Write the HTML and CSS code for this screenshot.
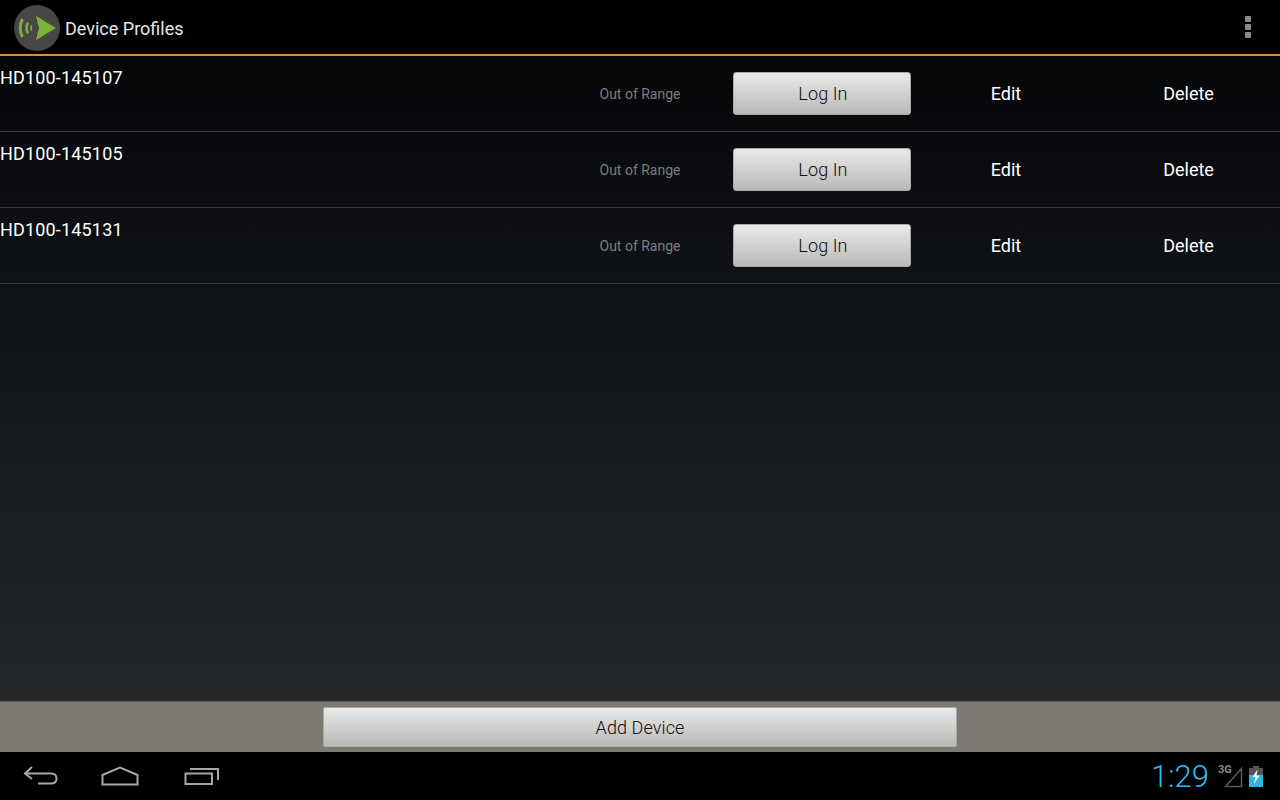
FILE: index.html
```html
<!DOCTYPE html>
<html lang="en">

<head>
    <meta charset="UTF-8" />
    <title>Device Profiles</title>
    <link rel="stylesheet" href="styles.css">
</head>

<body>
    <header class="action-bar">
        <svg class="app-icon" width="48" height="48" viewBox="0 0 48 48">
            <circle cx="24" cy="24" r="23" fill="#474745" />
            <path d="M23 12 L43 24 L23 36 L26 24 Z" fill="#7ab53a" />
            <path d="M9.500 15 Q5 24 9.500 33" fill="none" stroke="#7ab53a" stroke-width="2.800" />
            <path d="M15 18.500 Q12 24 15 29.500" fill="none" stroke="#7ab53a" stroke-width="2.400" />
            <path d="M18.500 21.500 Q17.500 24 18.500 26.500" fill="none" stroke="#7ab53a" stroke-width="1.800" />
        </svg>
        <h1 class="app-title">Device Profiles</h1>
        <div class="overflow-menu">
            <span></span>
            <span></span>
            <span></span>
        </div>
    </header>

    <main class="content">
        <div class="device-row">
            <div class="device-name">HD100-145107</div>
            <div class="device-status">Out of Range</div>
            <div class="login-cell"><button class="btn login-btn">Log In</button></div>
            <div class="row-action edit-cell">Edit</div>
            <div class="row-action delete-cell">Delete</div>
        </div>
        <div class="device-row">
            <div class="device-name">HD100-145105</div>
            <div class="device-status">Out of Range</div>
            <div class="login-cell"><button class="btn login-btn">Log In</button></div>
            <div class="row-action edit-cell">Edit</div>
            <div class="row-action delete-cell">Delete</div>
        </div>
        <div class="device-row">
            <div class="device-name">HD100-145131</div>
            <div class="device-status">Out of Range</div>
            <div class="login-cell"><button class="btn login-btn">Log In</button></div>
            <div class="row-action edit-cell">Edit</div>
            <div class="row-action delete-cell">Delete</div>
        </div>
    </main>

    <div class="add-bar">
        <button class="btn add-btn">Add Device</button>
    </div>

    <footer class="nav-bar">
        <svg class="nav-back" width="36" height="22" viewBox="0 0 36 22">
            <path d="M9 2 L2 8.500 L9 14 M2 8.500 H28 Q33.500 8.500 33.500 13.500 Q33.500 18.500 28 18.500 H15" fill="none" stroke="#a6a6a6" stroke-width="2" />
        </svg>
        <svg class="nav-home" width="38" height="20" viewBox="0 0 38 20">
            <path d="M1.500 9 L19 1.500 L36.500 9 V18.500 H1.500 Z" fill="none" stroke="#a6a6a6" stroke-width="2" />
        </svg>
        <svg class="nav-recent" width="36" height="20" viewBox="0 0 36 20">
            <path d="M1.500 7.500 H28 V18 H1.500 Z" fill="none" stroke="#a6a6a6" stroke-width="2" />
            <path d="M6 3 H34 V14" fill="none" stroke="#a6a6a6" stroke-width="2" />
        </svg>
        <div class="status-area">
            <span class="clock">1:29</span>
            <div class="signal">
                <span class="net-type">3G</span>
                <svg width="19" height="22" viewBox="0 0 19 22">
                    <path d="M1.500 20.500 L17.500 2.500 V20.500 Z" fill="none" stroke="#5a5a5a" stroke-width="1.500" />
                </svg>
            </div>
            <svg class="battery" width="14" height="21" viewBox="0 0 14 21">
                <rect x="4" y="0" width="6" height="2" fill="#555" />
                <rect x="0" y="2" width="14" height="7" fill="#555" />
                <rect x="0" y="9" width="14" height="12" fill="#2fb5e0" />
                <path d="M8.500 3.500 L3.500 11 H6.500 L5 18 L10.500 9.500 H7.500 Z" fill="#fff" />
            </svg>
        </div>
    </footer>
</body>

</html>
```

FILE: styles.css
```css
* {
    box-sizing: border-box;
}

html,
body {
    height: 100%;
}

body {
    margin: 0;
    height: 800px;
    display: flex;
    flex-direction: column;
    overflow: hidden;
    font-family: 'Roboto', sans-serif;
    color: #fff;
    background: #000;
}

/* Top bar */
.action-bar {
    height: 56px;
    flex: none;
    display: flex;
    align-items: center;
    padding-left: 13px;
    background: #000;
    border-bottom: 2px solid #e8872c;
}

.app-icon {
    flex: none;
    margin-top: 1px;
}

.app-title {
    margin: 2px 0 0 4px;
    font-size: 18px;
    font-weight: 400;
    color: #e6e6e6;
}

.overflow-menu {
    margin-left: auto;
    margin-right: 29px;
    display: flex;
    flex-direction: column;
    gap: 2px;
}

.overflow-menu span {
    width: 6px;
    height: 6px;
    background: #8a8a8a;
}

/* Device list */
.content {
    flex: 1;
    background: linear-gradient(to bottom, #050608, #23282d);
}

.device-row {
    height: 76px;
    display: flex;
    border-bottom: 1px solid #3a3b3c;
}

.device-name {
    flex: none;
    width: 560px;
    font-size: 18px;
    line-height: 21px;
    letter-spacing: 0.17px;
    padding-top: 11px;
}

.device-status {
    flex: none;
    width: 160px;
    padding-top: 1px;
    font-size: 14px;
    color: #7d7d7d;
    text-align: center;
    align-self: center;
}

.login-cell {
    flex: none;
    width: 206px;
    padding-right: 2px;
    display: flex;
    align-items: center;
    justify-content: center;
}

.btn {
    border: 1px solid #a9a9a8;
    padding: 0;
    font-family: inherit;
    font-weight: 300;
    letter-spacing: 0.1px;
    color: #0c0c0c;
    background: linear-gradient(to bottom, #e9e9e9, #b9b9b8);
}

.login-btn {
    width: 178px;
    height: 43px;
    padding-left: 2px;
    border-radius: 3px;
    font-size: 18px;
}

.row-action {
    flex: none;
    align-self: center;
    text-align: center;
    font-size: 18px;
}

.edit-cell {
    width: 160px;
}

.delete-cell {
    width: 194px;
    padding-left: 11px;
}

/* Bottom button */
.add-bar {
    height: 51px;
    flex: none;
    display: flex;
    justify-content: center;
    align-items: center;
    background: #7d7870;
    border-top: 1px solid #5e5b55;
}

.add-btn {
    width: 634px;
    height: 40px;
    font-size: 18px;
    border-radius: 2px;
}

/* System nav bar */
.nav-bar {
    height: 48px;
    flex: none;
    display: flex;
    align-items: center;
    padding-left: 23px;
    background: #000;
}

.nav-home {
    margin-left: 42px;
}

.nav-recent {
    margin-left: 45px;
}

.status-area {
    margin-left: auto;
    margin-right: 17px;
    display: flex;
    align-items: center;
}

.clock {
    font-size: 31px;
    font-weight: 300;
    color: #35bdea;
}

.signal {
    display: flex;
    align-items: flex-end;
    margin-left: 9px;
    position: relative;
    width: 25px;
    height: 24px;
    justify-content: flex-end;
}

.net-type {
    position: absolute;
    left: 0;
    top: -1px;
    font-size: 11px;
    font-weight: 700;
    color: #8a8a8a;
}

.battery {
    margin-left: 6px;
}
```
